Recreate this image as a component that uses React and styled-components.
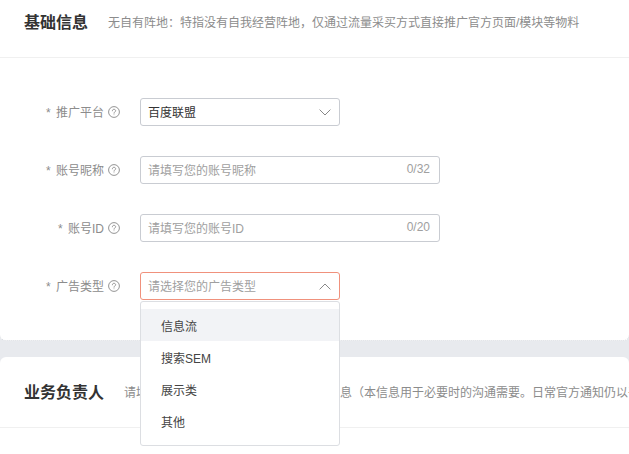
import React from 'react';
import styled, { createGlobalStyle } from 'styled-components';

const GlobalStyle = createGlobalStyle`
html, body {
  margin: 0;
  padding: 0;
  height: 100%;
  overflow: hidden;
  background: #e8eaee;
}
body {
  font-family: "Liberation Sans", "Noto Sans CJK SC", sans-serif;
  font-size: 12px;
}
`;

const Page = styled.div`
  width: 629px;
  height: 454px;
  overflow: hidden;
`;

const Scroller = styled.div`
  margin-top: -13px;
  display: flex;
  flex-direction: column;
  gap: 16px;
`;

const Card = styled.section`
  background: #fff;
  border-radius: 6px;
  min-height: 120px;
  border-bottom: ${(p) => (p.$dotted ? '1px dotted #d3d6dc' : 'none')};
`;

const CardHeader = styled.header`
  height: 71px;
  padding: 0 0 2px 24px;
  display: flex;
  align-items: center;
  gap: 20px;
  border-bottom: 1px solid #f0f0f0;
  box-sizing: border-box;
  white-space: nowrap;
  overflow: hidden;
`;

const Title = styled.h2`
  margin: 0;
  font-size: 16px;
  font-weight: 700;
  color: #333;
  flex: none;
`;

const Desc = styled.span`
  font-size: 12px;
  color: #8c8c8c;
`;

const Form = styled.div`
  padding: 40px 0;
  display: flex;
  flex-direction: column;
  gap: 30px;
`;

const Row = styled.div`
  display: flex;
  align-items: center;
  gap: 20px;
  height: 28px;
`;

const Label = styled.label`
  width: 120px;
  display: flex;
  justify-content: flex-end;
  align-items: center;
  color: #8c8c8c;
  font-size: 12px;
  gap: 4px;
`;

const LabelText = styled.span`
  padding-bottom: 2px;
`;

const Star = styled.span`
  margin-right: 2px;
`;

const Control = styled.div`
  position: relative;
  width: ${(p) => p.$width}px;
  height: 28px;
  box-sizing: border-box;
  padding: 0 8px 0 7px;
  display: flex;
  align-items: center;
  justify-content: space-between;
  border: 1px solid ${(p) => (p.$open ? '#f0917c' : '#c9ccd2')};
  border-radius: 3px;
  background: #fff;
`;

const Value = styled.span`
  color: ${(p) => (p.$placeholder ? '#a0a0a0' : '#333')};
  padding-bottom: 2px;
`;

const Counter = styled.span`
  color: #a0a0a0;
  padding: 0 1px 2px 0;
`;

const Menu = styled.ul`
  position: absolute;
  top: 28px;
  left: -1px;
  width: 200px;
  box-sizing: border-box;
  margin: 0;
  padding: 7px 0 8px;
  list-style: none;
  background: #fff;
  border: 1px solid #dcdee2;
  border-radius: 3px;
  z-index: 5;
`;

const MenuItem = styled.li`
  height: 32px;
  line-height: 36px;
  padding-left: 20px;
  color: #444;
  background: ${(p) => (p.$active ? '#f2f3f6' : 'transparent')};
`;

const HelpIcon = () => (
  <svg width="12" height="12" viewBox="0 0 12 12" fill="none" stroke="#888" strokeWidth="0.9">
    <circle cx="6" cy="6" r="5.4" />
    <path d="M4.4 4.8c0-1 .7-1.5 1.6-1.5s1.6.6 1.6 1.4c0 1.2-1.6 1.2-1.6 2.5" strokeLinecap="round" />
    <circle cx="6" cy="8.8" r="0.45" fill="#888" stroke="none" />
  </svg>
);

const Chevron = ({ up }) => (
  <svg width="12" height="7" viewBox="0 0 12 7" fill="none" stroke="#888" strokeWidth="1">
    <path d={up ? 'M.6 6.4 6 1l5.4 5.4' : 'M.6.6 6 6 11.4.6'} />
  </svg>
);

const Field = ({ label, children }) => (
  <Row>
    <Label>
      <LabelText><Star>*</Star> {label}</LabelText>
      <HelpIcon />
    </Label>
    {children}
  </Row>
);

const adTypes = ['信息流', '搜索SEM', '展示类', '其他'];

export default function App() {
  return (
    <Page>
      <GlobalStyle />
      <Scroller>
        <Card $dotted>
          <CardHeader>
            <Title>基础信息</Title>
            <Desc>无自有阵地：特指没有自我经营阵地，仅通过流量采买方式直接推广官方页面/模块等物料</Desc>
          </CardHeader>
          <Form>
            <Field label="推广平台">
              <Control $width={200}>
                <Value>百度联盟</Value>
                <Chevron />
              </Control>
            </Field>
            <Field label="账号昵称">
              <Control $width={300}>
                <Value $placeholder>请填写您的账号昵称</Value>
                <Counter>0/32</Counter>
              </Control>
            </Field>
            <Field label="账号ID">
              <Control $width={300}>
                <Value $placeholder>请填写您的账号ID</Value>
                <Counter>0/20</Counter>
              </Control>
            </Field>
            <Field label="广告类型">
              <Control $width={200} $open>
                <Value $placeholder>请选择您的广告类型</Value>
                <Chevron up />
                <Menu>
                  {adTypes.map((t, i) => (
                    <MenuItem key={t} $active={i === 0}>{t}</MenuItem>
                  ))}
                </Menu>
              </Control>
            </Field>
          </Form>
        </Card>
        <Card>
          <CardHeader>
            <Title>业务负责人</Title>
            <Desc>请填写您真实有效的业务负责人的联系信息（本信息用于必要时的沟通需要。日常官方通知仍以平台消息为准）</Desc>
          </CardHeader>
        </Card>
      </Scroller>
    </Page>
  );
}
